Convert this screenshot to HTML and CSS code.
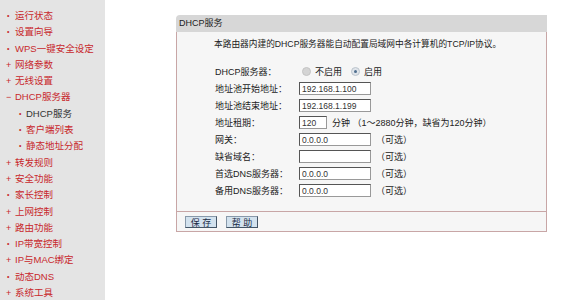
FILE: index.html
```html
<!DOCTYPE html>
<html lang="zh-CN">
<head>
<meta charset="utf-8">
<title>DHCP服务</title>
<link rel="stylesheet" href="styles.css">
</head>
<body>
<div class="page">
  <nav class="menu">
    <div class="item"><span class="mark dot">•</span>运行状态</div>
    <div class="item"><span class="mark dot">•</span>设置向导</div>
    <div class="item"><span class="mark dot">•</span>WPS一键安全设定</div>
    <div class="item"><span class="mark">+</span>网络参数</div>
    <div class="item"><span class="mark">+</span>无线设置</div>
    <div class="item"><span class="mark">−</span>DHCP服务器</div>
    <div class="item sub active"><span class="mark dot">•</span>DHCP服务</div>
    <div class="item sub"><span class="mark dot">•</span>客户端列表</div>
    <div class="item sub"><span class="mark dot">•</span>静态地址分配</div>
    <div class="item"><span class="mark">+</span>转发规则</div>
    <div class="item"><span class="mark">+</span>安全功能</div>
    <div class="item"><span class="mark dot">•</span>家长控制</div>
    <div class="item"><span class="mark">+</span>上网控制</div>
    <div class="item"><span class="mark">+</span>路由功能</div>
    <div class="item"><span class="mark dot">•</span>IP带宽控制</div>
    <div class="item"><span class="mark">+</span>IP与MAC绑定</div>
    <div class="item"><span class="mark dot">•</span>动态DNS</div>
    <div class="item"><span class="mark">+</span>系统工具</div>
  </nav>
  <main class="main">
    <section class="panel">
      <div class="panel-head">DHCP服务</div>
      <div class="panel-body">
        <p class="desc">本路由器内建的DHCP服务器能自动配置局域网中各计算机的TCP/IP协议。</p>
        <div class="row">
          <span class="label">DHCP服务器：</span>
          <span class="radio"></span><span class="rtext">不启用</span>
          <span class="radio on"></span><span class="rtext">启用</span>
        </div>
        <div class="row">
          <span class="label">地址池开始地址：</span>
          <span class="field">192.168.1.100</span>
        </div>
        <div class="row">
          <span class="label">地址池结束地址：</span>
          <span class="field">192.168.1.199</span>
        </div>
        <div class="row">
          <span class="label">地址租期：</span>
          <span class="field short">120</span>
          <span class="note">分钟 （1～2880分钟，缺省为120分钟）</span>
        </div>
        <div class="row">
          <span class="label">网关：</span>
          <span class="field">0.0.0.0</span>
          <span class="note">（可选）</span>
        </div>
        <div class="row">
          <span class="label">缺省域名：</span>
          <span class="field"></span>
          <span class="note">（可选）</span>
        </div>
        <div class="row">
          <span class="label">首选DNS服务器：</span>
          <span class="field">0.0.0.0</span>
          <span class="note">（可选）</span>
        </div>
        <div class="row">
          <span class="label">备用DNS服务器：</span>
          <span class="field">0.0.0.0</span>
          <span class="note">（可选）</span>
        </div>
      </div>
      <div class="panel-foot">
        <span class="btn">保 存</span>
        <span class="btn">帮 助</span>
      </div>
    </section>
  </main>
</div>
</body>
</html>
```
FILE: styles.css
```css
html, body {
  margin: 0;
  padding: 0;
  background: #ffffff;
  font-family: "Liberation Sans", "Noto Sans CJK SC", sans-serif;
}
.page {
  display: flex;
  width: 562px;
  height: 300px;
  overflow: hidden;
}
.menu {
  width: 105px;
  flex: none;
  background: #e4e4e4;
  padding-top: 8px;
  box-sizing: border-box;
}
.item {
  height: 16.3px;
  line-height: 16.3px;
  font-size: 9.5px;
  color: #c8282c;
  padding-left: 6px;
  white-space: nowrap;
  display: flex;
  align-items: center;
}
.item .mark {
  width: 9px;
  flex: none;
  font-size: 9px;
  color: #c8282c;
}
.item .mark.dot {
  font-size: 7px;
  padding-left: 1px;
  width: 8px;
}
.item.sub {
  padding-left: 18px;
}
.item.sub .mark {
  width: 7px;
}
.item.active {
  color: #333333;
}
.main {
  flex: 1;
  padding: 15px 0 0 71px;
}
.panel {
  width: 371px;
}
.panel-head {
  height: 17px;
  line-height: 17px;
  background: #d7d7d7;
  font-size: 9px;
  color: #222;
  padding-left: 3px;
  border-top-left-radius: 4px;
}
.panel-body {
  background: #f6f6f6;
  border-left: 1px solid #c8a6a6;
  border-right: 1px solid #c8a6a6;
  padding: 4px 0 12px 37px;
}
.desc {
  margin: 0 0 10px 0;
  font-size: 8.7px;
  line-height: 17px;
  color: #222;
}
.row {
  height: 17px;
  display: flex;
  align-items: center;
  font-size: 9px;
  color: #222;
}
.label {
  width: 84px;
  flex: none;
  padding-left: 1px;
}
.field {
  width: 72px;
  height: 13px;
  line-height: 13px;
  box-sizing: border-box;
  background: #ffffff;
  border: 1px solid #555555;
  border-right-color: #999;
  border-bottom-color: #999;
  padding-left: 2px;
  font-size: 8.5px;
  color: #333;
}
.field.short {
  width: 28px;
}
.note {
  margin-left: 5px;
}
.radio {
  width: 7px;
  height: 7px;
  border-radius: 50%;
  background: #d4d4d4;
  border: 1px solid #c4c4c4;
  margin: 0 4px 0 3px;
  position: relative;
}
.radio.on {
  background: #dfe4ea;
  border-color: #bcc4cc;
}
.radio.on::after {
  content: "";
  position: absolute;
  left: 2px;
  top: 2px;
  width: 3px;
  height: 3px;
  border-radius: 50%;
  background: #4f6e8e;
}
.rtext {
  margin-right: 6px;
}
.panel-foot {
  height: 19px;
  border: 1px solid #c8a6a6;
  background: #f6f6f6;
  display: flex;
  align-items: center;
  padding-left: 8px;
  gap: 9px;
}
.btn {
  display: inline-block;
  width: 32px;
  height: 12px;
  line-height: 12px;
  box-sizing: border-box;
  text-align: center;
  font-size: 9px;
  color: #1a2a44;
  background: #d3e2ee;
  border: 1px solid #445566;
  border-top-color: #8899aa;
  border-left-color: #8899aa;
}
```
